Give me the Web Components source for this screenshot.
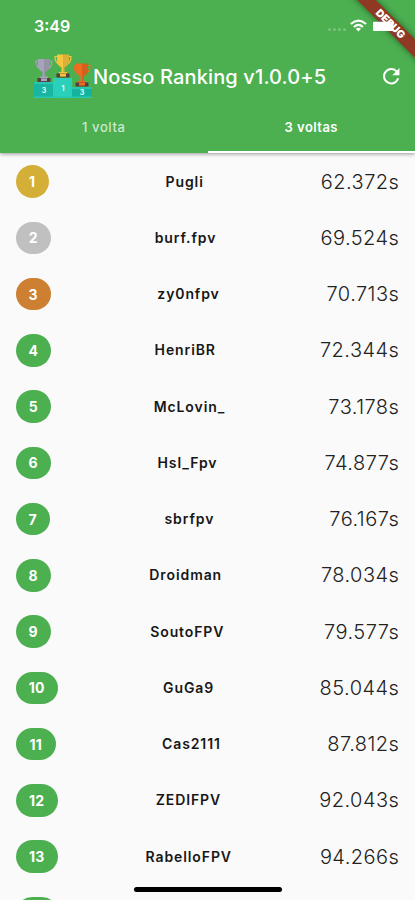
<!DOCTYPE html>
<html lang="pt-BR">
<head>
<meta charset="utf-8">
<title>Nosso Ranking</title>
<style>
html,body{margin:0;height:100%;overflow:hidden;background:#fafafa}
body{font-family:Inter,"Liberation Sans",sans-serif}
</style>
</head>
<body>
<ranking-app></ranking-app>
<script>
const define=(name,html,setup)=>customElements.define(name,class extends HTMLElement{
  connectedCallback(){
    if(this.shadowRoot)return;
    const t=document.createElement('template');
    t.innerHTML=html;
    this.attachShadow({mode:'open'}).append(t.content.cloneNode(true));
    if(setup)setup(this,this.shadowRoot);
  }
});

define('status-bar',`<style>
:host{display:flex;height:51px;box-sizing:border-box;padding:0 14px 0 34px;justify-content:space-between;align-items:center;color:#fff}
time{font-size:16px;font-weight:600;letter-spacing:0}
svg{display:block;margin-top:-1px}
</style><time>3:49</time>
<svg width="76" height="24" viewBox="0 0 76 24" fill="#fff">
<g opacity=".25"><circle cx="4.5" cy="16.5" r="1.5"/><circle cx="9.5" cy="16.5" r="1.5"/><circle cx="14.5" cy="16.5" r="1.5"/><circle cx="19.5" cy="16.5" r="1.5"/></g>
<g fill="none" stroke="#fff" stroke-width="2.2"><path d="M25.8 11Q33.4 4.2 41 11"/><path d="M28.9 14Q33.4 9.8 37.9 14"/></g>
<path d="M30.8 15.8Q33.4 13.7 36 15.8L33.4 18.5Z"/>
<rect x="48" y="8.8" width="20.5" height="9.2" rx="1"/>
</svg>`);

define('trophy-podium',`<style>:host{display:block;width:60px;height:46px}svg{display:block}text{font:700 7px Inter,sans-serif;fill:#e3fffa;text-anchor:middle}</style>
<svg width="60" height="46" viewBox="0 0 60 46">
<defs><g id="cup"><path d="M-5-17H-8Q-8-10-3-9M5-17H8Q8-10 3-9" fill="none" stroke="currentColor" stroke-width="1.2"/><path d="M-6-19H6V-13Q6-8 1.5-6V-1H-1.5V-6Q-6-8-6-13Z" fill="currentColor"/><path d="M0-19H6V-13Q6-8 1.5-6V-1H0Z" opacity=".1"/><rect x="-4" y="-1.5" width="8" height="2.2" fill="currentColor"/><rect x="-6.5" y="0" width="13" height="4" fill="#553c42"/><rect x="-3" y=".3" width="6" height="2.8" fill="currentColor"/></g></defs>
<path d="M1 28H20V44H1Z" fill="#18b5a1"/><path d="M20 24H39V44H20Z" fill="#2bd0ba"/><path d="M39 33H59V44H39Z" fill="#14b39f"/>
<path d="M1 28H20V30H1ZM39 33H59V35H39ZM1 42.5H59V44H1Z" fill="#26c8b2"/>
<use href="#cup" x="11" y="24" color="#a6a4b8"/><use href="#cup" x="30" y="19.5" color="#f5c53d"/><use href="#cup" x="49" y="28.5" color="#ed6b22"/>
<text x="11" y="38.5">3</text><text x="30" y="36.5">1</text><text x="49" y="41">3</text>
</svg>`);

define('app-bar',`<style>
:host{display:flex;height:51px;align-items:center;padding:0 15px 0 33px;color:#fff}
trophy-podium{margin-top:1px}
h1{margin:0;flex:1;font-size:20px;line-height:28px;font-weight:500;letter-spacing:.14px;white-space:nowrap}
svg{display:block}
</style><trophy-podium></trophy-podium><h1><slot></slot></h1>
<svg width="18.5" height="18.5" viewBox="3 3 18 18"><path fill="#fff" d="M17.65 6.35A7.96 7.96 0 0 0 12 4a8 8 0 1 0 7.73 10h-2.08A6 6 0 1 1 12 6c1.66 0 3.14.69 4.22 1.78L13 11h7V4z"/></svg>`);

define('tab-item',`<style>
:host{flex:1;display:flex;align-items:center;justify-content:center;box-sizing:border-box;border-bottom:2px solid transparent;color:#ffffffb8;font-size:13px;font-weight:500;letter-spacing:.6px}
:host([active]){color:#fff;border-color:#fff;font-weight:600;letter-spacing:.45px}
</style><slot></slot>`);

define('top-header',`<style>
:host{display:block;position:relative;z-index:1;height:153px;background:#4caf50;box-shadow:0 1px 4px #0006}
status-bar{position:relative;z-index:1}
nav{display:flex;height:51px}
.clip{position:absolute;right:0;top:0;width:70px;height:70px;overflow:hidden}
.label{z-index:2}
.ribbon{position:absolute;width:120px;height:13px;left:-16px;top:15.5px;transform:rotate(45deg)}
.band{background:#8f3823;box-shadow:0 0 6px #0007}
.text{color:#fff;font-size:10.5px;line-height:13px;font-weight:900;text-align:center;text-indent:4px}
</style><div class="clip"><div class="ribbon band"></div></div><status-bar></status-bar><app-bar>Nosso Ranking v1.0.0+5</app-bar><nav><tab-item>1 volta</tab-item><tab-item active>3 voltas</tab-item></nav><div class="clip label"><div class="ribbon text">DEBUG</div></div>`);

define('rank-row',`<style>
:host{display:flex;height:56.25px;align-items:center;justify-content:space-between;padding:0 16px;color:#171717}
.badge{box-sizing:border-box;height:32.5px;border-radius:17px;background:var(--badge,#4caf50);color:#fff;font-size:14px;font-weight:700;display:flex;align-items:center;justify-content:center;letter-spacing:.25px}
.name{font-size:14px;font-weight:600;letter-spacing:.9px;margin-top:-1px}
.time{font-size:20px;font-weight:300;letter-spacing:.45px;color:#222;margin-right:-.3px}
</style><span class="badge"></span><span class="name"><slot></slot></span><span class="time"></span>`,(el,r)=>{
  const b=r.querySelector('.badge');
  b.textContent=el.getAttribute('rank');
  b.style.width=el.getAttribute('badge-width')+'px';
  r.querySelector('.time').textContent=el.getAttribute('time');
});

define('home-indicator',`<style>:host{position:absolute;left:134px;bottom:8px;width:148px;height:5px;border-radius:3px;background:#000}</style>`);

const rows=[['Pugli','62.372s',32.5,'#d4af37'],['burf.fpv','69.524s',34.5,'#c0c0c0'],['zy0nfpv','70.713s',34.5,'#cd7f32'],['HenriBR','72.344s',34.5],['McLovin_','73.178s',34.5],['Hsl_Fpv','74.877s',34.5],['sbrfpv','76.167s',33.5],['Droidman','78.034s',34.5],['SoutoFPV','79.577s',34.5],['GuGa9','85.044s',41.5],['Cas2111','87.812s',39.5],['ZEDIFPV','92.043s',41.5],['RabelloFPV','94.266s',41.5],['','',41.5]];
define('ranking-app',`<style>
:host{display:block;position:relative;width:415px;height:900px;overflow:hidden;background:#fafafa}
main{padding-top:.4px}
</style><top-header></top-header><main>${rows.map(([n,t,w,c],i)=>`<rank-row rank="${n?i+1:''}" time="${t}" badge-width="${w}"${c?` style="--badge:${c}"`:''}>${n}</rank-row>`).join('')}</main><home-indicator></home-indicator>`);
</script>
</body>
</html>
